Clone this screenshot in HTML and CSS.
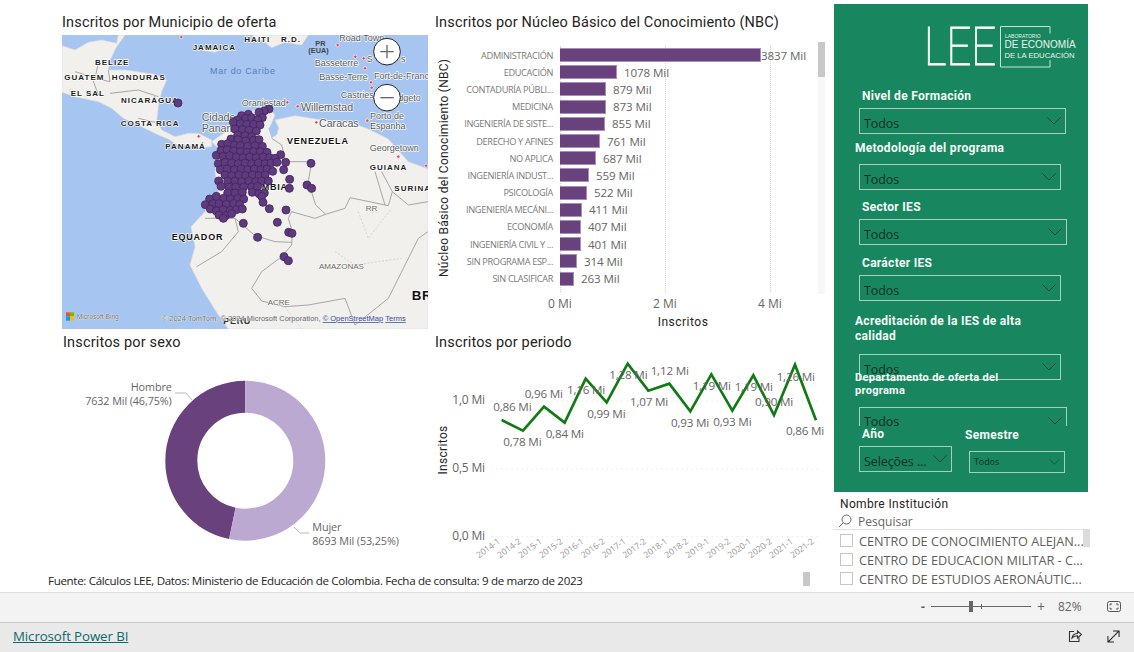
FILE: index.html
```html
<!DOCTYPE html>
<html lang="es">
<head>
<meta charset="utf-8">
<title>Inscritos</title>
<link rel="stylesheet" href="styles.css">
</head>
<body>
<div class="report">
  <div class="main">
    <div class="row row-top">
      <section class="cell-left">
        <h2 class="title">Inscritos por Municipio de oferta</h2>
        <svg class="map" viewBox="21 90 1098 882" role="img" aria-label="Mapa">
          <rect class="ocean" x="21" y="90" width="1098" height="882"/>
          <path class="land" d="M21,122 60,135 100,112 140,105 185,115 190,90 210,90 182,130 166,165 160,195 210,195 300,208 335,225 320,260 310,305 305,350 320,375 360,395 400,385 430,385 470,405 470,425 430,428 400,420 370,422 340,402 310,390 260,365 205,340 170,310 130,290 60,275 21,262Z"/>
          <path class="land" d="M470,410 510,382 530,342 570,322 640,308 660,330 645,365 660,395 672,370 660,345 720,332 800,345 880,350 940,372 1000,402 1060,470 1119,492 1119,972 520,972 490,930 440,850 405,780 420,725 408,665 450,620 455,598 490,560 480,500 490,430Z"/>
          <path class="land" d="M595,90 760,90 740,120 690,112 650,128 625,108 590,100Z"/>
          <path class="land" d="M440,128 495,136 480,142 445,136Z"/>
          <path class="water" d="M640,370 660,358 668,385 650,400Z"/>
          <g class="border">
            <path d="M130,175 120,220 165,230 160,195"/>
            <path d="M60,200 110,215 130,270"/>
            <path d="M165,265 250,255 310,275"/>
            <path d="M250,340 300,352"/>
            <path d="M650,400 680,420 692,470 770,470 760,530 782,600 812,628 870,610 885,578 1000,602 1012,560 980,500"/>
            <path d="M1012,560 1060,600 1119,590"/>
            <path d="M812,628 780,640 710,620 700,640 712,680 710,720 680,755 620,800 590,850 620,888 690,905 760,900 870,880 900,960"/>
            <path d="M450,640 540,640 600,692 660,710 710,712"/>
            <path d="M540,640 550,680 500,740 425,785"/>
            <path d="M960,500 990,600"/>
            <path d="M900,960 1000,880 1090,700 1119,680"/>
          </g>
          <path class="border-thin" d="M910,620 940,700 1010,610M840,740 900,780 1040,760M690,905 740,972"/>
          <g class="cities">
            <circle cx="379" cy="96" r="5"/><circle cx="848" cy="120" r="5"/><circle cx="901" cy="155" r="5"/><circle cx="926" cy="160" r="5"/><circle cx="930" cy="190" r="5"/><circle cx="948" cy="232" r="5"/><circle cx="950" cy="248" r="5"/><circle cx="697" cy="292" r="5"/><circle cx="728" cy="304" r="5"/><circle cx="784" cy="352" r="5"/><circle cx="937" cy="347" r="5"/><circle cx="431" cy="394" r="5"/><circle cx="1030" cy="455" r="5"/><circle cx="1113" cy="482" r="5"/>
          </g>
          <g class="map-bold">
            <text x="413" y="134">JAMAICA</text><text x="568" y="111">HAITI</text><text x="678" y="111">R.D.</text><text x="120" y="180">BELIZE</text><text x="28" y="225">GUATEM</text><text x="170" y="225">HONDURAS</text><text x="47" y="273">EL SAL</text><text x="198" y="294">NICARÁGUA</text><text x="197" y="362">COSTA RICA</text><text x="331" y="432">PANAMÁ</text><text x="1018" y="558">SURINA</text><text x="944" y="494">GUIANA</text>
          </g>
          <text class="map-bold-lg" x="696" y="417">VENEZUELA</text>
          <text class="map-bold-lg" x="350" y="704">EQUADOR</text>
          <text class="map-bold-lg" x="620" y="556">MBIA</text>
          <text class="map-peru" x="505" y="958">PERU</text>
          <text class="map-br" x="1070" y="886">BR</text>
          <text class="map-sea" x="465" y="206">Mar do Caribe</text>
          <g class="map-city">
            <text x="853" y="107">Road Town</text><text x="779" y="184">Basseterre</text><text x="793" y="224">Basse-Terre</text><text x="957" y="222">Fort-de-Franc</text><text x="857" y="280">Castries</text><text x="1030" y="288">dgeto</text><text x="560" y="302">Oranjestad</text><text x="1038" y="172">s</text><text x="935" y="172">S</text>
            <text x="945" y="342">Porto de</text><text x="945" y="372">Espanha</text><text x="944" y="438">Georgetown</text>
          </g>
          <g class="map-city-lg"><text x="738" y="318">Willemstad</text><text x="440" y="347">Cidade</text><text x="440" y="381">Panamá</text><text x="792" y="366">Caracas</text></g>
          <g class="map-region"><text x="932" y="617">RR</text><text x="792" y="793">AMAZONAS</text><text x="638" y="901">ACRE</text></g>
          <text class="map-pr" x="781" y="123">PR</text><text class="map-pr" x="760" y="143">(EUA)</text>
          <g class="dots">
            <circle cx="369" cy="294"/><circle cx="642" cy="312"/><circle cx="628" cy="318"/><circle cx="612" cy="322"/><circle cx="580" cy="328"/><circle cx="560" cy="332"/><circle cx="572" cy="340"/><circle cx="590" cy="338"/><circle cx="548" cy="345"/><circle cx="622" cy="338"/><circle cx="608" cy="345"/><circle cx="535" cy="352"/><circle cx="556" cy="356"/><circle cx="575" cy="358"/><circle cx="596" cy="358"/><circle cx="615" cy="360"/><circle cx="540" cy="372"/><circle cx="562" cy="374"/><circle cx="582" cy="376"/><circle cx="604" cy="378"/><circle cx="548" cy="390"/><circle cx="570" cy="392"/><circle cx="590" cy="395"/><circle cx="528" cy="402"/><circle cx="548" cy="404"/><circle cx="572" cy="408"/><circle cx="596" cy="406"/><circle cx="612" cy="404"/><circle cx="500" cy="418"/><circle cx="518" cy="416"/><circle cx="538" cy="420"/><circle cx="556" cy="422"/><circle cx="578" cy="424"/><circle cx="600" cy="422"/><circle cx="622" cy="424"/><circle cx="484" cy="451"/><circle cx="498" cy="436"/><circle cx="516" cy="434"/><circle cx="536" cy="438"/><circle cx="556" cy="440"/><circle cx="576" cy="442"/><circle cx="596" cy="440"/><circle cx="616" cy="440"/><circle cx="636" cy="442"/><circle cx="677" cy="449"/><circle cx="504" cy="454"/><circle cx="524" cy="452"/><circle cx="544" cy="456"/><circle cx="564" cy="458"/><circle cx="584" cy="456"/><circle cx="604" cy="458"/><circle cx="624" cy="456"/><circle cx="644" cy="458"/><circle cx="660" cy="460"/><circle cx="490" cy="476"/><circle cx="510" cy="472"/><circle cx="530" cy="474"/><circle cx="550" cy="476"/><circle cx="570" cy="474"/><circle cx="590" cy="476"/><circle cx="610" cy="474"/><circle cx="630" cy="476"/><circle cx="648" cy="474"/><circle cx="666" cy="472"/><circle cx="692" cy="472"/><circle cx="768" cy="475"/><circle cx="496" cy="494"/><circle cx="516" cy="492"/><circle cx="538" cy="494"/><circle cx="558" cy="492"/><circle cx="578" cy="494"/><circle cx="598" cy="492"/><circle cx="618" cy="494"/><circle cx="636" cy="492"/><circle cx="653" cy="499"/><circle cx="686" cy="494"/><circle cx="510" cy="510"/><circle cx="530" cy="512"/><circle cx="552" cy="510"/><circle cx="572" cy="512"/><circle cx="592" cy="510"/><circle cx="612" cy="512"/><circle cx="630" cy="510"/><circle cx="491" cy="528"/><circle cx="518" cy="528"/><circle cx="540" cy="528"/><circle cx="560" cy="530"/><circle cx="582" cy="528"/><circle cx="602" cy="530"/><circle cx="620" cy="528"/><circle cx="640" cy="528"/><circle cx="704" cy="523"/><circle cx="498" cy="544"/><circle cx="522" cy="546"/><circle cx="542" cy="546"/><circle cx="566" cy="546"/><circle cx="590" cy="546"/><circle cx="608" cy="544"/><circle cx="703" cy="550"/><circle cx="756" cy="540"/><circle cx="770" cy="550"/><circle cx="518" cy="564"/><circle cx="540" cy="564"/><circle cx="562" cy="562"/><circle cx="592" cy="562"/><circle cx="612" cy="566"/><circle cx="628" cy="564"/><circle cx="464" cy="582"/><circle cx="484" cy="574"/><circle cx="506" cy="580"/><circle cx="526" cy="582"/><circle cx="548" cy="580"/><circle cx="566" cy="582"/><circle cx="620" cy="574"/><circle cx="624" cy="592"/><circle cx="451" cy="599"/><circle cx="474" cy="596"/><circle cx="492" cy="596"/><circle cx="514" cy="598"/><circle cx="536" cy="596"/><circle cx="554" cy="598"/><circle cx="643" cy="611"/><circle cx="693" cy="615"/><circle cx="466" cy="612"/><circle cx="484" cy="618"/><circle cx="504" cy="614"/><circle cx="526" cy="616"/><circle cx="544" cy="614"/><circle cx="562" cy="612"/><circle cx="492" cy="630"/><circle cx="512" cy="632"/><circle cx="530" cy="626"/><circle cx="505" cy="640"/><circle cx="565" cy="655"/><circle cx="667" cy="652"/><circle cx="608" cy="697"/><circle cx="701" cy="682"/><circle cx="711" cy="685"/><circle cx="687" cy="755"/><circle cx="700" cy="767"/>
          </g>
          <g class="zoom-btn"><circle cx="996" cy="140" r="40"/><path d="M976,140H1016M996,120V160"/></g>
          <g class="zoom-btn"><circle cx="996" cy="278" r="40"/><path d="M976,278H1016"/></g>
          <rect class="ms1" x="33" y="922" width="12" height="12"/><rect class="ms2" x="45" y="922" width="12" height="12"/><rect class="ms3" x="33" y="934" width="12" height="13"/><rect class="ms4" x="45" y="934" width="12" height="13"/>
          <text class="map-credit" x="65" y="942">Microsoft Bing</text>
          <text class="map-credit map-credit-lg" x="320" y="948">© 2024 TomTom, © 2024 Microsoft Corporation, <tspan class="map-link">© OpenStreetMap</tspan>  <tspan class="map-link">Terms</tspan></text>
        </svg>
      </section>
      <section class="cell-mid">
        <h2 class="title">Inscritos por Núcleo Básico del Conocimiento (NBC)</h2>
        <div class="nbc">
          <div class="plot-row">
            <div class="axis-v">Núcleo Básico del Conocimiento (NBC)</div>
            <div class="bars">
              <i class="grid g0"></i><i class="grid g1"></i><i class="grid g2"></i>
              <div class="bar-row"><span class="bar-label">ADMINISTRACIÓN</span><span class="bar" style="width:201px"></span><span class="bar-val tight">3837 Mil</span></div>
              <div class="bar-row"><span class="bar-label">EDUCACIÓN</span><span class="bar" style="width:57px"></span><span class="bar-val">1078 Mil</span></div>
              <div class="bar-row"><span class="bar-label">CONTADURÍA PÚBLI...</span><span class="bar" style="width:46px"></span><span class="bar-val">879 Mil</span></div>
              <div class="bar-row"><span class="bar-label">MEDICINA</span><span class="bar" style="width:46px"></span><span class="bar-val">873 Mil</span></div>
              <div class="bar-row"><span class="bar-label">INGENIERÍA DE SISTE...</span><span class="bar" style="width:45px"></span><span class="bar-val">855 Mil</span></div>
              <div class="bar-row"><span class="bar-label">DERECHO Y AFINES</span><span class="bar" style="width:40px"></span><span class="bar-val">761 Mil</span></div>
              <div class="bar-row"><span class="bar-label">NO APLICA</span><span class="bar" style="width:36px"></span><span class="bar-val">687 Mil</span></div>
              <div class="bar-row"><span class="bar-label">INGENIERÍA INDUST...</span><span class="bar" style="width:29px"></span><span class="bar-val">559 Mil</span></div>
              <div class="bar-row"><span class="bar-label">PSICOLOGÍA</span><span class="bar" style="width:27px"></span><span class="bar-val">522 Mil</span></div>
              <div class="bar-row"><span class="bar-label">INGENIERÍA MECÁNI...</span><span class="bar" style="width:22px"></span><span class="bar-val">411 Mil</span></div>
              <div class="bar-row"><span class="bar-label">ECONOMÍA</span><span class="bar" style="width:21px"></span><span class="bar-val">407 Mil</span></div>
              <div class="bar-row"><span class="bar-label">INGENIERÍA CIVIL Y ...</span><span class="bar" style="width:21px"></span><span class="bar-val">401 Mil</span></div>
              <div class="bar-row"><span class="bar-label">SIN PROGRAMA ESP...</span><span class="bar" style="width:17px"></span><span class="bar-val">314 Mil</span></div>
              <div class="bar-row"><span class="bar-label">SIN CLASIFICAR</span><span class="bar" style="width:14px"></span><span class="bar-val">263 Mil</span></div>
            </div>
          </div>
          <div class="ticks"><span>0 Mi</span><span>2 Mi</span><span>4 Mi</span></div>
          <div class="axis-h">Inscritos</div>
          <div class="v-scroll"><div class="v-thumb"></div></div>
        </div>
      </section>
    </div>
    <div class="row row-bottom">
      <section class="cell-left">
        <h2 class="title">Inscritos por sexo</h2>
        <svg class="donut" viewBox="62 351 373 219" role="img" aria-label="Inscritos por sexo">
          <circle class="arc-dark" cx="245.3" cy="460.7" r="64" pathLength="100" stroke-dasharray="0 53.25 46.75 0" transform="rotate(-90 245.3 460.7)"/>
          <circle class="arc-light" cx="245.3" cy="460.7" r="64" pathLength="100" stroke-dasharray="53.25 46.75" transform="rotate(-90 245.3 460.7)"/>
          <path class="leader" d="M175,393H186L192,400M294,527L300,533H309"/>
          <text class="donut-label end" x="171.7" y="391">Hombre</text>
          <text class="donut-label end" x="171.7" y="405">7632 Mil (46,75%)</text>
          <text class="donut-label" x="312.3" y="531">Mujer</text>
          <text class="donut-label" x="312.3" y="545">8693 Mil (53,25%)</text>
        </svg>
      </section>
      <section class="cell-mid">
        <h2 class="title">Inscritos por periodo</h2>
        <svg class="line-chart" viewBox="15 66 1170 660" role="img" aria-label="Inscritos por periodo">
          <path class="hgrid" d="M185,210H1172M185,414H1172M185,617H1172"/>
          <g class="yt"><text x="165" y="220">1,0 Mi</text><text x="165" y="424">0,5 Mi</text><text x="165" y="627">0,0 Mi</text></g>
          <text class="ytitle" transform="translate(50 357) rotate(-90)">Inscritos</text>
          <polyline class="trend" points="215,267 279,299 342,227 404,275 467,143 530,214 593,98 655,179 718,158 781,241 844,130 907,239 970,133 1032,252 1095,101 1158,268"/>
          <g class="pt">
            <text x="190" y="240">0,86 Mi</text><text x="220" y="345">0,78 Mi</text><text x="284" y="201">0,96 Mi</text><text x="347" y="321">0,84 Mi</text><text x="411" y="190">1,16 Mi</text><text x="472" y="262">0,99 Mi</text><text x="538" y="143">1,28 Mi</text><text x="600" y="225">1,07 Mi</text><text x="662" y="131">1,12 Mi</text><text x="723" y="289">0,93 Mi</text><text x="788" y="178">1,19 Mi</text><text x="850" y="285">0,93 Mi</text><text x="914" y="180">1,19 Mi</text><text x="975" y="226">0,90 Mi</text><text x="1040" y="150">1,26 Mi</text><text x="1068" y="312">0,86 Mi</text>
          </g>
          <g class="xt">
            <text transform="translate(212 635) rotate(-36)">2014-1</text><text transform="translate(275 635) rotate(-36)">2014-2</text><text transform="translate(338 635) rotate(-36)">2015-1</text><text transform="translate(400 635) rotate(-36)">2015-2</text><text transform="translate(463 635) rotate(-36)">2016-1</text><text transform="translate(526 635) rotate(-36)">2016-2</text><text transform="translate(589 635) rotate(-36)">2017-1</text><text transform="translate(651 635) rotate(-36)">2017-2</text><text transform="translate(714 635) rotate(-36)">2018-1</text><text transform="translate(777 635) rotate(-36)">2018-2</text><text transform="translate(840 635) rotate(-36)">2019-1</text><text transform="translate(903 635) rotate(-36)">2019-2</text><text transform="translate(966 635) rotate(-36)">2020-1</text><text transform="translate(1028 635) rotate(-36)">2020-2</text><text transform="translate(1091 635) rotate(-36)">2021-1</text><text transform="translate(1154 635) rotate(-36)">2021-2</text>
          </g>
        </svg>
      </section>
    </div>
    <div class="source">
      <p class="source-text">Fuente: Cálculos LEE, Datos: Ministerio de Educación de Colombia. Fecha de consulta: 9 de marzo de 2023</p>
      <div class="page-scroll"></div>
    </div>
  </div>
  <aside class="side">
    <div class="panel">
      <div class="logo">
        <svg class="logo-svg" viewBox="0 0 170 44" role="img" aria-label="LEE Laboratorio de Economía de la Educación">
          <text class="logo-lee" x="-3" y="39" textLength="72" lengthAdjust="spacingAndGlyphs">LEE</text>
          <path class="logo-box" d="M123,7.5V.5H73.500V41H123V34"/>
          <text class="logo-s" x="78" y="11.700">LABORATORIO</text>
          <text class="logo-m" x="77.500" y="22.400">DE ECONOMÍA</text>
          <text class="logo-n" x="77.500" y="32.300">DE LA EDUCACIÓN</text>
        </svg>
      </div>
      <div class="lab lab-in lab-1">Nivel de Formación</div>
      <div class="dd w207 dd-a"><span>Todos</span><svg class="chev" viewBox="0 0 14 8"><path d="M.5,.5 7,7 13.500,.5"/></svg></div>
      <div class="lab lab-out lab-2">Metodología del programa</div>
      <div class="dd w202 dd-b"><span>Todos</span><svg class="chev" viewBox="0 0 14 8"><path d="M.5,.5 7,7 13.500,.5"/></svg></div>
      <div class="lab lab-in lab-3">Sector IES</div>
      <div class="dd w208 dd-a"><span>Todos</span><svg class="chev" viewBox="0 0 14 8"><path d="M.5,.5 7,7 13.500,.5"/></svg></div>
      <div class="lab lab-in lab-4">Carácter IES</div>
      <div class="dd w202 dd-a"><span>Todos</span><svg class="chev" viewBox="0 0 14 8"><path d="M.5,.5 7,7 13.500,.5"/></svg></div>
      <div class="lab lab-out lab-5">Acreditación de la IES de alta calidad</div>
      <div class="dd w202 dd-c"><span>Todos</span><svg class="chev" viewBox="0 0 14 8"><path d="M.5,.5 7,7 13.500,.5"/></svg></div>
      <div class="lab lab-out lab-6">Departamento de oferta del programa</div>
      <div class="dd w208 dd-c dd-clip"><span>Todos</span><svg class="chev" viewBox="0 0 14 8"><path d="M.5,.5 7,7 13.500,.5"/></svg></div>
      <div class="pair">
        <div class="pair-a">
          <div class="lab lab-in">Año</div>
          <div class="dd dd-year"><span>Seleções ...</span><svg class="chev" viewBox="0 0 14 8"><path d="M.5,.5 7,7 13.500,.5"/></svg></div>
        </div>
        <div class="pair-b">
          <div class="lab lab-sem">Semestre</div>
          <div class="dd dd-sem"><span>Todos</span><svg class="chev chev-sm" viewBox="0 0 14 8"><path d="M.5,.5 7,7 13.500,.5"/></svg></div>
        </div>
      </div>
    </div>
    <div class="inst">
      <div class="inst-title">Nombre Institución</div>
      <div class="search">
        <svg class="search-ico" viewBox="0 0 14 14"><circle cx="8.500" cy="5.500" r="4.500"/><path d="M5.500,8.500 1,13"/></svg>
        <span>Pesquisar</span>
      </div>
      <ul class="inst-list">
        <li><i class="check"></i>CENTRO DE CONOCIMIENTO ALEJAN...</li>
        <li><i class="check"></i>CENTRO DE EDUCACION MILITAR - C...</li>
        <li><i class="check"></i>CENTRO DE ESTUDIOS AERONÁUTIC...</li>
      </ul>
      <div class="inst-thumb"></div>
    </div>
  </aside>
</div>
<div class="status">
  <span class="zoom-minus">-</span>
  <div class="slider"><i class="slider-tick"></i><i class="slider-thumb"></i></div>
  <span class="zoom-plus">+</span>
  <span class="zoom-pct">82%</span>
  <svg class="fit" viewBox="0 0 14 11"><rect x=".5" y=".5" width="13" height="10" rx="2"/><path d="M3,4.500V3H5M11,4.500V3H9M3,6.500V8H5M11,6.500V8H9"/></svg>
</div>
<footer class="footer">
  <a class="pbi" href="#">Microsoft Power BI</a>
  <svg class="share" viewBox="0 0 14 14"><path d="M6,2.500H1.500V12.500H11V8.500"/><path d="M4,9C4.500,6 6.500,4.500 9.500,4.500V2L13.500,5.500 9.500,9V6.800C7.500,6.800 5.500,7.500 4,9Z"/></svg>
  <svg class="expand" viewBox="0 0 14 14"><path d="M1,13 13,1M6.500,1H13V7.500M1,6.500V13H7.500"/></svg>
</footer>
</body>
</html>
```
FILE: styles.css
```css
* { box-sizing: border-box; }
html, body { margin: 0; padding: 0; }
body {
  width: 1134px;
  height: 652px;
  overflow: hidden;
  background: #fff;
  font-family: "Open Sans", "Noto Sans", sans-serif;
  display: flex;
  flex-direction: column;
}
.report { height: 592px; display: flex; }
.main { width: 834px; display: flex; flex-direction: column; }
.row { display: flex; }
.row-top { padding-top: 14px; height: 329px; }
.row-bottom { padding-top: 5px; height: 242px; }
.cell-left { width: 373px; margin-left: 62px; }
.cell-mid { width: 390px; margin-left: 0; }
.title {
  margin: 0 0 3px;
  font: 400 14.5px/18px Roboto, sans-serif;
  letter-spacing: .16px;
  color: #252423;
  white-space: nowrap;
}
.row-bottom .cell-left .title { margin: 0 0 -1px 1px; }
.row-bottom .cell-mid .title { margin-bottom: 1px; }

/* map */
.map { display: block; width: 366px; height: 294px; }
.ocean { fill: #a6c5f0; }
.land { fill: #f1f0ed; stroke: #dcdcd8; stroke-width: 2; }
.water { fill: #a6c5f0; }
.border path { fill: none; stroke: #a6a6a6; stroke-width: 3; }
.border-thin { fill: none; stroke: #c4c4c4; stroke-width: 2; stroke-dasharray: 6 5; }
.cities circle { fill: #e2445c; stroke: #fff; stroke-width: 2; }
.map text { font-family: "Liberation Sans", Arial, sans-serif; paint-order: stroke; stroke-linejoin: round; }
.map-bold text { font-size: 24px; font-weight: 700; letter-spacing: 3px; fill: #1c1c1c; stroke: #fff; stroke-width: 4; }
.map-bold-lg { font-size: 27px; font-weight: 700; letter-spacing: 2.4px; fill: #111; stroke: #fff; stroke-width: 4; }
.map-peru { font-size: 27px; font-weight: 700; letter-spacing: 2px; fill: #333; }
.map-br { font-size: 40px; font-weight: 700; letter-spacing: 2px; fill: #111; stroke: #fff; stroke-width: 4; }
.map-sea { font-size: 27px; letter-spacing: 2px; fill: #5a7fba; }
.map-city text { font-size: 27px; fill: #55585c; stroke: #fff; stroke-width: 4; }
.map-city-lg text { font-size: 32px; fill: #55585c; stroke: #fff; stroke-width: 4; }
.map-region text { font-size: 24px; fill: #6b5f5a; stroke: #fff; stroke-width: 3; }
.map-pr { font-size: 22px; font-weight: 700; fill: #444; }
.dots circle { r: 12px; fill: #5f3a7f; stroke: #40265c; stroke-width: 2.5; }
.zoom-btn circle { fill: #fff; stroke: #222; stroke-width: 3; }
.zoom-btn path { fill: none; stroke: #666; stroke-width: 4; }
.ms1 { fill: #f25022; } .ms2 { fill: #7fba00; } .ms3 { fill: #00a4ef; } .ms4 { fill: #ffb900; }
.map-credit { font-size: 20px; fill: #6d6d6d; stroke: #eee; stroke-width: 2; }
.map-credit-lg { font-size: 22.5px; }
.map-link { fill: #3a4f9f; text-decoration: underline; }

/* bars */
.nbc { position: relative; width: 390px; height: 294px; padding-top: 11.5px; }
.plot-row { display: flex; height: 241px; }
.axis-v {
  width: 16px;
  margin-left: 1px;
  margin-right: -1px;
  writing-mode: vertical-rl;
  transform: rotate(180deg);
  text-align: center;
  font: 400 12px/16px Roboto, sans-serif;
  letter-spacing: .28px;
  color: #252423;
  white-space: nowrap;
}
.bars { position: relative; flex: 1; display: flex; flex-direction: column; }
.grid { position: absolute; top: -1px; bottom: -4px; border-left: 1px dotted #d5d5d5; }
.g0 { left: 109px; } .g1 { left: 214px; } .g2 { left: 319px; }
.bar-row { position: relative; height: 17.2px; display: flex; align-items: center; }
.bar-label {
  width: 102px;
  margin-right: 7px;
  text-align: right;
  font-size: 9.2px;
  letter-spacing: -.35px;
  color: #7a7a7a;
  white-space: nowrap;
}
.bar { height: 14px; background: #69417d; border: 1px solid #a78fbc; border-width: 1px 1px 1px 0; }
.bar-val { margin-left: 7px; font-size: 11.6px; letter-spacing: -.1px; color: #666; white-space: nowrap; }
.bar-val.tight { margin-left: 0; }
.ticks { display: flex; margin: 8.5px 0 0 72.5px; }
.ticks span { width: 105px; text-align: center; font-size: 12px; line-height: 16px; color: #666; }
.axis-h { margin: 2px 0 0 148px; width: 200px; text-align: center; font: 400 12px/16px Roboto, sans-serif; letter-spacing: .5px; color: #252423; }
.v-scroll { position: absolute; left: 383px; top: 7px; width: 7px; height: 252px; background: #f7f7f7; }
.v-thumb { height: 35px; background: #c8c8c8; }

/* donut */
.donut { display: block; width: 373px; height: 219px; }
.arc-dark, .arc-light { fill: none; stroke-width: 32; }
.arc-dark { stroke: #69417d; }
.arc-light { stroke: #bca9d2; }
.leader { fill: none; stroke: #bbb; stroke-width: 1; }
.donut-label { font-family: "Open Sans", sans-serif; font-size: 10.8px; letter-spacing: -.1px; fill: #666; }
.donut-label.end { text-anchor: end; }

/* line */
.line-chart { display: block; width: 390px; height: 220px; }
.hgrid { fill: none; stroke: #ddd; stroke-width: 3; stroke-dasharray: 3 12; }
.line-chart text { font-family: "Open Sans", sans-serif; }
.yt text { font-size: 36px; text-anchor: end; fill: #666; letter-spacing: -.5px; }
.line-chart .ytitle { font-size: 36px; text-anchor: middle; fill: #252423; font-family: Roboto, sans-serif; letter-spacing: 1px; }
.trend { fill: none; stroke: #117a14; stroke-width: 8; stroke-linejoin: miter; }
.pt text { font-size: 35px; fill: #666; letter-spacing: -.6px; }
.xt text { font-size: 26px; text-anchor: end; fill: #9a9a9a; letter-spacing: -.4px; }

/* source */
.source { display: flex; align-items: flex-start; height: 21px; }
.source-text { margin: 2px 0 0 48px; width: 755px; font-size: 11.6px; line-height: 16px; letter-spacing: -.34px; color: #252423; white-space: nowrap; }
.page-scroll { width: 7px; height: 14px; margin-top: 1px; background: #c8c8c8; }

/* side */
.side { width: 300px; padding-top: 4px; }
.panel { width: 254px; height: 488px; padding-left: 25px; background: #18875f; overflow: hidden; }
.logo { height: 84px; margin-left: 68px; padding-top: 22px; }
.logo-svg { display: block; width: 170px; height: 44px; overflow: visible; }
.logo-box { fill: none; stroke: #c9e2d8; stroke-width: 1; }
.logo-svg text { font-family: "Liberation Sans", sans-serif; fill: #e9f4ef; }
.logo-svg .logo-lee { font-family: Roboto, sans-serif; font-weight: 100; font-size: 54px; fill: #fff; stroke: #fff; stroke-width: .9; }
.logo-s { font-size: 5px; }
.logo-m { font-size: 10px; }
.logo-n { font-size: 7.700px; }
.lab { position: relative; font: 700 12px/16px Roboto, sans-serif; letter-spacing: .3px; color: #f4fbf8; }
.lab-in { margin-left: 3px; }
.lab-out { margin-left: -4px; width: 190px; }
.lab-2 { margin-top: 6px; }
.lab-3 { margin-top: 9px; }
.lab-4 { margin-top: 10px; }
.lab-5 { margin-top: 13px; line-height: 15px; }
.lab-6 { margin-top: -9px; font-size: 11px; line-height: 13px; width: 160px; }
.dd {
  height: 26px;
  border: 1.5px solid #a6cfc0;
  padding: 0 4px 0 4px;
  display: flex;
  align-items: flex-end;
  justify-content: space-between;
  font-size: 12.500px;
  line-height: 18px;
  color: #0e2f23;
  overflow: hidden;
}
.dd span { white-space: nowrap; letter-spacing: -.1px; }
.dd-a { margin-top: 4px; }
.dd-b { margin-top: 8px; }
.dd-c { margin-top: 10px; }
.w202 { width: 202px; }
.w207 { width: 207px; }
.w208 { width: 208px; }
.dd-clip { height: 19px; border-bottom: 0; align-items: flex-start; padding-top: 5px; }
.chev { width: 14px; height: 8px; fill: none; stroke: #174a38; stroke-width: 1; align-self: center; flex: none; }
.dd-clip .chev { margin-top: 4px; align-self: flex-start; }
.pair { display: flex; }
.pair-a { width: 110px; }
.pair-b { width: 96px; padding-top: 1px; }
.lab-sem { margin-left: -4px; }
.dd-year { width: 93px; margin-top: 4px; }
.dd-sem { width: 96px; height: 21.500px; margin-top: 8px; font-size: 9px; align-items: center; }
.chev-sm { width: 11px; height: 6px; }

.inst { position: relative; margin-top: 4px; padding-left: 6px; }
.inst-title { font: 400 12px/16px Roboto, sans-serif; letter-spacing: .35px; color: #252423; }
.search { width: 256px; margin: 1px 0 0 -7px; height: 17px; padding-left: 5px; border-bottom: 1px solid #e3e3e3; display: flex; align-items: center; font-size: 12px; color: #666; }
.search-ico { width: 14px; height: 14px; margin-right: 6px; fill: none; stroke: #666; stroke-width: 1; }
.inst-list { list-style: none; margin: 1px 0 0; padding: 0; }
.inst-list li { height: 19px; display: flex; align-items: center; font-size: 12.700px; color: #605e5c; letter-spacing: -.02px; white-space: nowrap; }
.check { width: 13px; height: 13px; border: 1px solid #c8c6c4; margin-right: 6px; flex: none; }
.inst-thumb { position: absolute; left: 249px; top: 33px; width: 7px; height: 18px; background: #dcdcdc; }

/* bars at bottom */
.status {
  height: 30px;
  background: #f3f3f3;
  border-top: 1px solid #dedede;
  display: flex;
  align-items: center;
  padding: 0 0 3px 921px;
  font-size: 12px;
  color: #666;
}
.zoom-minus { width: 10px; font-weight: 700; color: #555; }
.slider { position: relative; width: 100px; height: 1px; background: #666; }
.slider-tick { position: absolute; left: 50px; top: -2px; width: 1px; height: 5px; background: #666; }
.slider-thumb { position: absolute; left: 38px; top: -5px; width: 4px; height: 11px; background: #666; }
.zoom-plus { margin-left: 6px; width: 21px; font-size: 14px; }
.zoom-pct { width: 49px; }
.fit { width: 14px; height: 11px; fill: none; stroke: #555; stroke-width: 1; }
.footer {
  height: 30px;
  background: #e9e9e9;
  border-top: 1px solid #c8c8c8;
  display: flex;
  align-items: center;
  padding: 0 0 3px 13px;
}
.pbi { font-size: 13.300px; letter-spacing: -.1px; color: #0b6a6a; width: 1055px; }
.share { width: 14px; height: 14px; fill: none; stroke: #333; stroke-width: 1.1; margin-right: 25px; }
.expand { width: 13px; height: 13px; fill: none; stroke: #222; stroke-width: 1.1; }
```
